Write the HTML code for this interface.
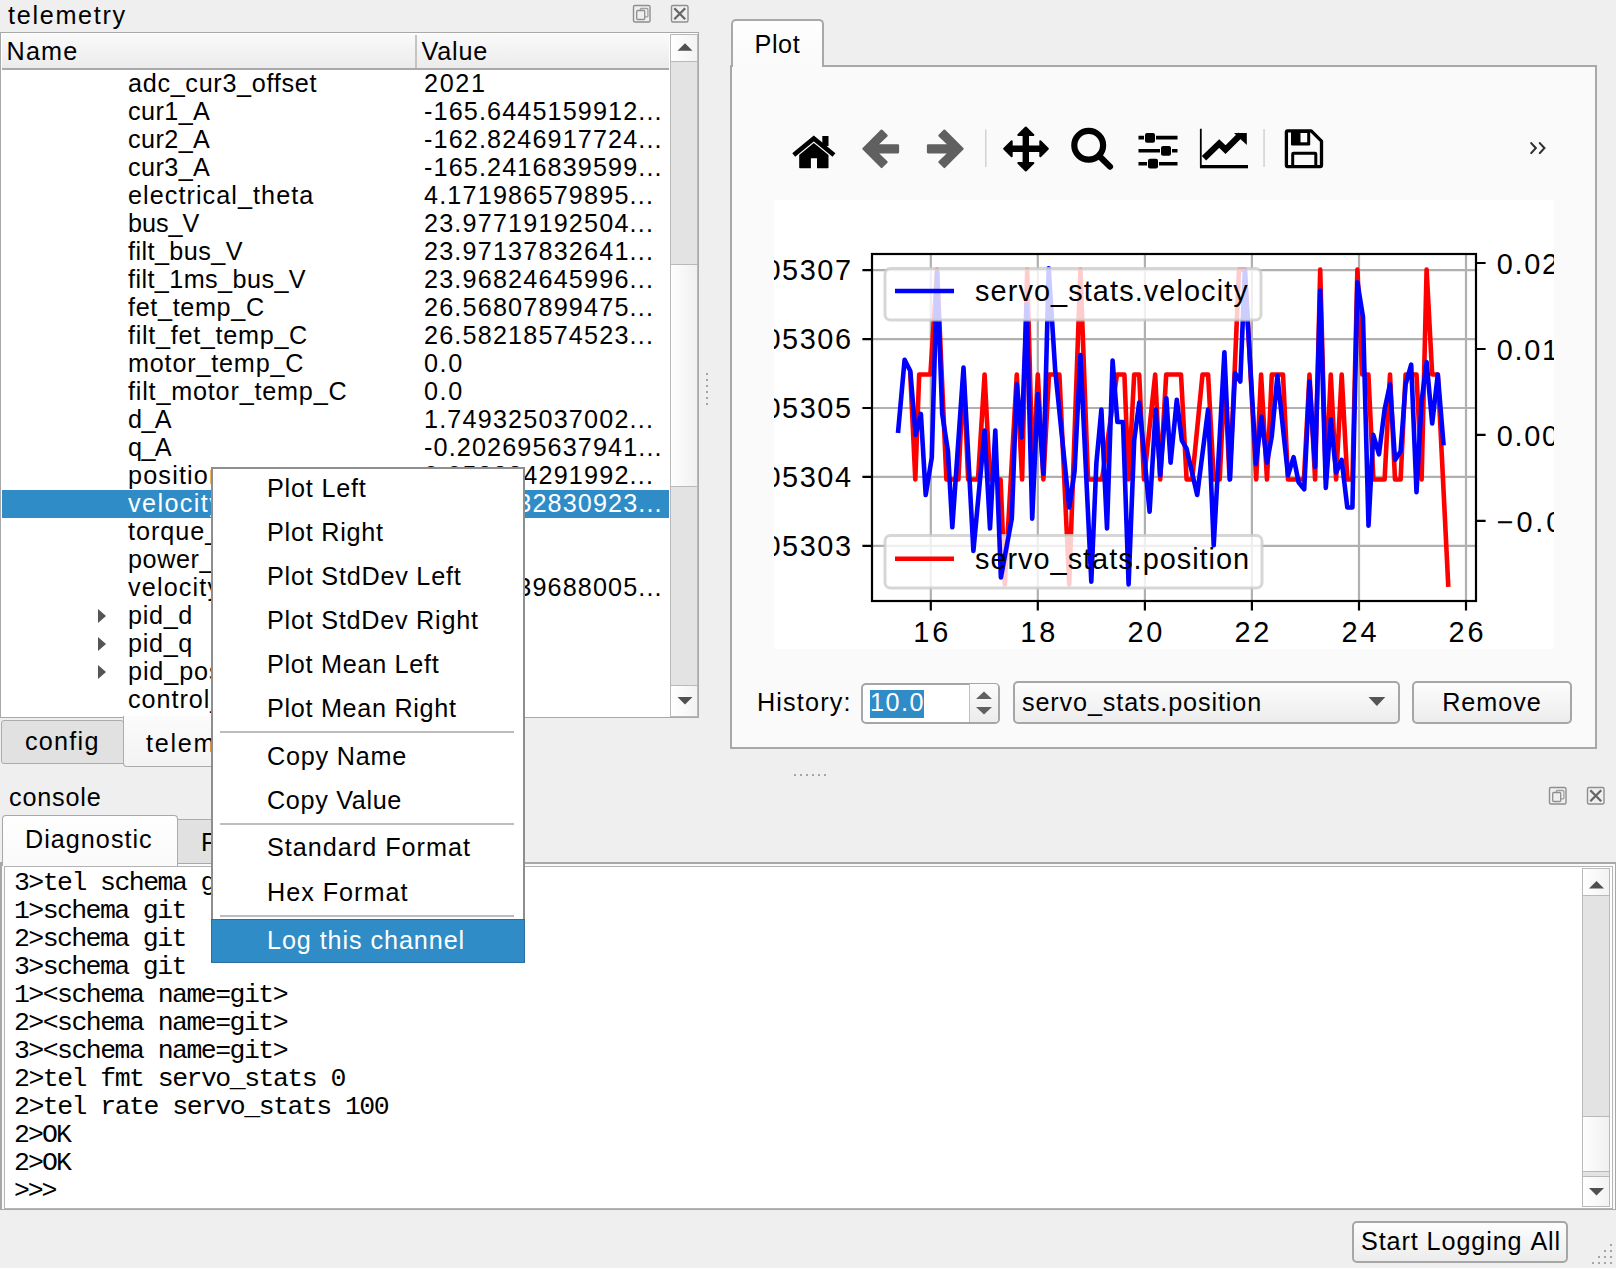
<!DOCTYPE html><html><head><meta charset="utf-8"><style>
html,body{margin:0;padding:0;width:1616px;height:1268px;overflow:hidden;background:#efefef;}
.t{position:absolute;white-space:pre;line-height:normal;}
.b{position:absolute;box-sizing:border-box;}
svg{position:absolute;overflow:visible;}
</style></head><body>
<div class="t" style="left:8.00px;top:0.89px;font-size:25.20px;letter-spacing:1.701px;color:#000;font-family:'Liberation Sans',sans-serif;">telemetry</div>
<svg style="left:0;top:0" width="1" height="1"><rect x="633.5" y="5.5" width="16.5" height="16.5" rx="1.5" fill="none" stroke="#8f8f8f" stroke-width="1.4"/><rect x="640.3" y="8.5" width="7.6" height="8.4" rx="1" fill="none" stroke="#a0a0a0" stroke-width="1.3"/><rect x="636.7" y="10.5" width="8" height="9" rx="1" fill="#efefef" stroke="#8f8f8f" stroke-width="1.3"/><rect x="671.5" y="5.5" width="16.5" height="16.5" rx="1.5" fill="none" stroke="#8f8f8f" stroke-width="1.4"/><path d="M674.3 8.3L685.2 19.2M685.2 8.3L674.3 19.2" stroke="#666" stroke-width="2.3"/></svg>
<div class="b" style="left:0px;top:32px;width:699px;height:686px;border:1.5px solid #a8a8a8;background:#fff;"></div>
<div class="b" style="left:1.5px;top:33.5px;width:667.5px;height:36.0px;background:linear-gradient(#fafafa,#ebebeb);border-bottom:2px solid #a9a9a9;"></div>
<div class="b" style="left:415px;top:35px;width:2px;height:33px;background:#c4c4c4;"></div>
<div class="t" style="left:6.50px;top:37.19px;font-size:25.20px;letter-spacing:1.195px;color:#000;font-family:'Liberation Sans',sans-serif;">Name</div>
<div class="t" style="left:421.50px;top:37.19px;font-size:25.20px;letter-spacing:0.829px;color:#000;font-family:'Liberation Sans',sans-serif;">Value</div>
<div class="t" style="left:128.00px;top:69.19px;font-size:25.20px;letter-spacing:0.688px;color:#000;font-family:'Liberation Sans',sans-serif;">adc_cur3_offset</div>
<div class="t" style="left:424.00px;top:69.19px;font-size:25.20px;letter-spacing:1.673px;color:#000;font-family:'Liberation Sans',sans-serif;">2021</div>
<div class="t" style="left:128.00px;top:97.19px;font-size:25.20px;letter-spacing:0.423px;color:#000;font-family:'Liberation Sans',sans-serif;">cur1_A</div>
<div class="t" style="left:424.00px;top:97.19px;font-size:25.20px;letter-spacing:1.123px;color:#000;font-family:'Liberation Sans',sans-serif;">-165.6445159912...</div>
<div class="t" style="left:128.00px;top:125.19px;font-size:25.20px;letter-spacing:0.423px;color:#000;font-family:'Liberation Sans',sans-serif;">cur2_A</div>
<div class="t" style="left:424.00px;top:125.19px;font-size:25.20px;letter-spacing:1.123px;color:#000;font-family:'Liberation Sans',sans-serif;">-162.8246917724...</div>
<div class="t" style="left:128.00px;top:153.19px;font-size:25.20px;letter-spacing:0.423px;color:#000;font-family:'Liberation Sans',sans-serif;">cur3_A</div>
<div class="t" style="left:424.00px;top:153.19px;font-size:25.20px;letter-spacing:1.123px;color:#000;font-family:'Liberation Sans',sans-serif;">-165.2416839599...</div>
<div class="t" style="left:128.00px;top:181.19px;font-size:25.20px;letter-spacing:1.061px;color:#000;font-family:'Liberation Sans',sans-serif;">electrical_theta</div>
<div class="t" style="left:424.00px;top:181.19px;font-size:25.20px;letter-spacing:1.176px;color:#000;font-family:'Liberation Sans',sans-serif;">4.171986579895...</div>
<div class="t" style="left:128.00px;top:209.19px;font-size:25.20px;letter-spacing:-0.022px;color:#000;font-family:'Liberation Sans',sans-serif;">bus_V</div>
<div class="t" style="left:424.00px;top:209.19px;font-size:25.20px;letter-spacing:1.176px;color:#000;font-family:'Liberation Sans',sans-serif;">23.97719192504...</div>
<div class="t" style="left:128.00px;top:237.19px;font-size:25.20px;letter-spacing:0.433px;color:#000;font-family:'Liberation Sans',sans-serif;">filt_bus_V</div>
<div class="t" style="left:424.00px;top:237.19px;font-size:25.20px;letter-spacing:1.176px;color:#000;font-family:'Liberation Sans',sans-serif;">23.97137832641...</div>
<div class="t" style="left:128.00px;top:265.19px;font-size:25.20px;letter-spacing:0.417px;color:#000;font-family:'Liberation Sans',sans-serif;">filt_1ms_bus_V</div>
<div class="t" style="left:424.00px;top:265.19px;font-size:25.20px;letter-spacing:1.176px;color:#000;font-family:'Liberation Sans',sans-serif;">23.96824645996...</div>
<div class="t" style="left:128.00px;top:293.19px;font-size:25.20px;letter-spacing:0.656px;color:#000;font-family:'Liberation Sans',sans-serif;">fet_temp_C</div>
<div class="t" style="left:424.00px;top:293.19px;font-size:25.20px;letter-spacing:1.176px;color:#000;font-family:'Liberation Sans',sans-serif;">26.56807899475...</div>
<div class="t" style="left:128.00px;top:321.19px;font-size:25.20px;letter-spacing:0.706px;color:#000;font-family:'Liberation Sans',sans-serif;">filt_fet_temp_C</div>
<div class="t" style="left:424.00px;top:321.19px;font-size:25.20px;letter-spacing:1.176px;color:#000;font-family:'Liberation Sans',sans-serif;">26.58218574523...</div>
<div class="t" style="left:128.00px;top:349.19px;font-size:25.20px;letter-spacing:0.809px;color:#000;font-family:'Liberation Sans',sans-serif;">motor_temp_C</div>
<div class="t" style="left:424.00px;top:349.19px;font-size:25.20px;letter-spacing:1.568px;color:#000;font-family:'Liberation Sans',sans-serif;">0.0</div>
<div class="t" style="left:128.00px;top:377.19px;font-size:25.20px;letter-spacing:0.805px;color:#000;font-family:'Liberation Sans',sans-serif;">filt_motor_temp_C</div>
<div class="t" style="left:424.00px;top:377.19px;font-size:25.20px;letter-spacing:1.568px;color:#000;font-family:'Liberation Sans',sans-serif;">0.0</div>
<div class="t" style="left:128.00px;top:405.19px;font-size:25.20px;letter-spacing:-0.593px;color:#000;font-family:'Liberation Sans',sans-serif;">d_A</div>
<div class="t" style="left:424.00px;top:405.19px;font-size:25.20px;letter-spacing:1.176px;color:#000;font-family:'Liberation Sans',sans-serif;">1.749325037002...</div>
<div class="t" style="left:128.00px;top:433.19px;font-size:25.20px;letter-spacing:-0.593px;color:#000;font-family:'Liberation Sans',sans-serif;">q_A</div>
<div class="t" style="left:424.00px;top:433.19px;font-size:25.20px;letter-spacing:1.123px;color:#000;font-family:'Liberation Sans',sans-serif;">-0.202695637941...</div>
<div class="t" style="left:128.00px;top:461.19px;font-size:25.20px;letter-spacing:1.172px;color:#000;font-family:'Liberation Sans',sans-serif;">position</div>
<div class="t" style="left:424.00px;top:461.19px;font-size:25.20px;letter-spacing:1.176px;color:#000;font-family:'Liberation Sans',sans-serif;">0.053284291992...</div>
<div class="b" style="left:1.5px;top:490px;width:667.5px;height:28px;background:#308cc6;"></div>
<div class="t" style="left:128.00px;top:489.19px;font-size:25.20px;letter-spacing:1.395px;color:#fff;font-family:'Liberation Sans',sans-serif;">velocity</div>
<div class="t" style="left:424.00px;top:489.19px;font-size:25.20px;letter-spacing:1.123px;color:#fff;font-family:'Liberation Sans',sans-serif;">-0.004232830923...</div>
<div class="t" style="left:128.00px;top:517.19px;font-size:25.20px;letter-spacing:0.981px;color:#000;font-family:'Liberation Sans',sans-serif;">torque_Nm</div>
<div class="t" style="left:128.00px;top:545.19px;font-size:25.20px;letter-spacing:0.579px;color:#000;font-family:'Liberation Sans',sans-serif;">power_W</div>
<div class="t" style="left:128.00px;top:573.19px;font-size:25.20px;letter-spacing:1.146px;color:#000;font-family:'Liberation Sans',sans-serif;">velocity_filt</div>
<div class="t" style="left:424.00px;top:573.19px;font-size:25.20px;letter-spacing:1.123px;color:#000;font-family:'Liberation Sans',sans-serif;">-0.003539688005...</div>
<div class="t" style="left:128.00px;top:601.19px;font-size:25.20px;letter-spacing:0.678px;color:#000;font-family:'Liberation Sans',sans-serif;">pid_d</div>
<svg style="left:0;top:0" width="1" height="1"><path d="M98 609.0L106 616.0L98 623.0Z" fill="#555"/></svg>
<div class="t" style="left:128.00px;top:629.19px;font-size:25.20px;letter-spacing:0.678px;color:#000;font-family:'Liberation Sans',sans-serif;">pid_q</div>
<svg style="left:0;top:0" width="1" height="1"><path d="M98 637.0L106 644.0L98 651.0Z" fill="#555"/></svg>
<div class="t" style="left:128.00px;top:657.19px;font-size:25.20px;letter-spacing:0.882px;color:#000;font-family:'Liberation Sans',sans-serif;">pid_position</div>
<svg style="left:0;top:0" width="1" height="1"><path d="M98 665.0L106 672.0L98 679.0Z" fill="#555"/></svg>
<div class="t" style="left:128.00px;top:685.19px;font-size:25.20px;letter-spacing:0.951px;color:#000;font-family:'Liberation Sans',sans-serif;">control_position</div>
<div class="b" style="left:670px;top:33.5px;width:27.5px;height:683.0px;background:#e3e3e3;border-left:1.5px solid #b9b9b9;border-right:1.5px solid #b9b9b9;"></div>
<div class="b" style="left:670px;top:33.5px;width:27.5px;height:28.5px;background:linear-gradient(90deg,#fff,#f3f3f3);border:1.5px solid #b9b9b9;"></div>
<div class="b" style="left:670px;top:264px;width:27.5px;height:223px;background:linear-gradient(90deg,#fefefe,#f0f0f0);border:1.5px solid #b9b9b9;"></div>
<div class="b" style="left:670px;top:685px;width:27.5px;height:31.5px;background:linear-gradient(90deg,#fff,#f3f3f3);border:1.5px solid #b9b9b9;"></div>
<svg style="left:0;top:0" width="1" height="1"><path d="M677.5 50.7L692.5 50.7L685 43.3Z" fill="#505050"/><path d="M677.5 697L692.5 697L685 704.5Z" fill="#505050"/></svg>
<div class="b" style="left:1px;top:720px;width:123px;height:44px;background:#e1e1e1;border:1.5px solid #acacac;border-top-left-radius:3px;border-top-right-radius:3px;border-bottom-left-radius:3px;"></div>
<div class="b" style="left:123px;top:716px;width:107px;height:51px;background:linear-gradient(#fbfbfb,#f3f3f3);border:1.5px solid #acacac;border-top:none;border-bottom-left-radius:4px;border-bottom-right-radius:4px;"></div>
<div class="t" style="left:25.00px;top:727.19px;font-size:25.20px;letter-spacing:1.239px;color:#000;font-family:'Liberation Sans',sans-serif;">config</div>
<div class="t" style="left:146.00px;top:729.19px;font-size:25.20px;letter-spacing:1.701px;color:#000;font-family:'Liberation Sans',sans-serif;">telemetry</div>
<div class="b" style="left:706px;top:373px;width:2px;height:2px;background:#a5a5a5;"></div>
<div class="b" style="left:706px;top:379px;width:2px;height:2px;background:#a5a5a5;"></div>
<div class="b" style="left:706px;top:385px;width:2px;height:2px;background:#a5a5a5;"></div>
<div class="b" style="left:706px;top:391px;width:2px;height:2px;background:#a5a5a5;"></div>
<div class="b" style="left:706px;top:397px;width:2px;height:2px;background:#a5a5a5;"></div>
<div class="b" style="left:706px;top:403px;width:2px;height:2px;background:#a5a5a5;"></div>
<div class="b" style="left:794px;top:774px;width:2px;height:2px;background:#a5a5a5;"></div>
<div class="b" style="left:800px;top:774px;width:2px;height:2px;background:#a5a5a5;"></div>
<div class="b" style="left:806px;top:774px;width:2px;height:2px;background:#a5a5a5;"></div>
<div class="b" style="left:812px;top:774px;width:2px;height:2px;background:#a5a5a5;"></div>
<div class="b" style="left:818px;top:774px;width:2px;height:2px;background:#a5a5a5;"></div>
<div class="b" style="left:824px;top:774px;width:2px;height:2px;background:#a5a5a5;"></div>
<div class="b" style="left:730px;top:65px;width:867px;height:684px;background:#fafafa;border:2px solid #a8a8a8;"></div>
<div class="b" style="left:730.5px;top:18.5px;width:93.0px;height:48.5px;background:linear-gradient(#fefefe,#fafafa);border:2px solid #a8a8a8;border-bottom:none;border-top-left-radius:5px;border-top-right-radius:5px;"></div>
<div class="t" style="left:754.50px;top:29.89px;font-size:25.20px;letter-spacing:0.604px;color:#000;font-family:'Liberation Sans',sans-serif;">Plot</div>
<svg style="left:0;top:0" width="1" height="1"><path d="M795.5 153.5L813.8 138.5L832.2 153.5" fill="none" stroke="#000" stroke-width="4.6" stroke-linecap="square"/><rect x="822.3" y="136" width="6.2" height="10" fill="#000"/><path d="M799.2 155L813.8 143L828.5 155L828.5 167.5Q828.5 168.3 827.7 168.3L817 168.3L817 158.2L810.9 158.2L810.9 168.3L800 168.3Q799.2 168.3 799.2 167.5Z" fill="#000"/><path d="M863.4 148.8L881.6 130.6L886.6 135.6L876.5 145.3L898 145.3L898 152.3L876.5 152.3L886.6 162L881.6 167Z" fill="#606060" stroke="#606060" stroke-width="2.2" stroke-linejoin="round"/><path d="M962.6 148.8L944.4 130.6L939.4 135.6L949.5 145.3L928 145.3L928 152.3L949.5 152.3L939.4 162L944.4 167Z" fill="#606060" stroke="#606060" stroke-width="2.2" stroke-linejoin="round"/><rect x="985" y="129.5" width="1.5" height="37.5" fill="#d2d2d2"/><path d="M1025.8 131L1025.8 167M1008 148.8L1044 148.8" stroke="#000" stroke-width="6.4"/><path d="M1025.8 127.5L1033.3 135L1018.3 135Z M1025.8 170.5L1033.3 163L1018.3 163Z M1004.2 148.8L1011.7 141.3L1011.7 156.3Z M1047.8 148.8L1040.3 141.3L1040.3 156.3Z" fill="#000" stroke="#000" stroke-width="2" stroke-linejoin="round"/><circle cx="1088.7" cy="145.3" r="14.4" fill="none" stroke="#000" stroke-width="6.2"/><path d="M1099.5 156.3L1110 166.6" stroke="#000" stroke-width="6.2" stroke-linecap="round"/><path d="M1138.5 137.6H1144M1156 137.6H1177.5M1138.5 150.8H1160M1172 150.8H1177.5M1138.5 163.7H1147M1159 163.7H1177.5" stroke="#000" stroke-width="3.6"/><rect x="1145" y="133" width="10" height="9.7" rx="2" fill="#000"/><rect x="1161" y="146" width="10" height="9.7" rx="2" fill="#000"/><rect x="1148" y="158.8" width="10" height="9.7" rx="2" fill="#000"/><path d="M1200.8 128.8V166.6H1248" fill="none" stroke="#000" stroke-width="1.8"/><rect x="1200" y="165" width="48" height="3.3" fill="#000"/><path d="M1204 158.3L1219.2 143.5L1225.5 149.6L1240.5 134.8" fill="none" stroke="#000" stroke-width="6.2"/><path d="M1234 133L1246.8 133L1246.8 145Z" fill="#000"/><rect x="1263.3" y="129" width="1.5" height="38" fill="#d2d2d2"/><path d="M1287.7 130.9H1311.2L1321.5 141.2V165.3Q1321.5 166.6 1320.2 166.6H1287.7Q1286.4 166.6 1286.4 165.3V132.2Q1286.4 130.9 1287.7 130.9Z" fill="none" stroke="#000" stroke-width="3.3" stroke-linejoin="round"/><path d="M1291 130.5H1310.2V144.2Q1310.2 145.5 1308.9 145.5H1292.3Q1291 145.5 1291 144.2Z" fill="#000"/><rect x="1300.5" y="133" width="6.7" height="9.3" fill="#fafafa"/><path d="M1292.7 167V154Q1292.7 153.2 1293.5 153.2H1315Q1315.8 153.2 1315.8 154V167" fill="none" stroke="#000" stroke-width="3"/></svg>
<svg style="left:0;top:0" width="1" height="1"><path d="M1531.2 143.1L1535.8 148.1L1531.2 153.1M1539.8 143.1L1544.4 148.1L1539.8 153.1" fill="none" stroke="#2e2e2e" stroke-width="2.1" stroke-linecap="round"/></svg>
<div class="b" style="left:774px;top:200px;width:780px;height:449px;background:#fff;"></div>
<div style="position:absolute;left:0;top:0;width:1616px;height:1268px;clip-path:inset(200px 62px 619px 774px);">
<svg style="left:0;top:0" width="1" height="1"><path d="M930.8 254V601M1037.8 254V601M1144.9 254V601M1251.9 254V601M1359.0 254V601M1466.0 254V601M872 270.2H1476M872 339.1H1476M872 408.0H1476M872 476.9H1476M872 545.8H1476" stroke="#b0b0b0" stroke-width="2.2"/><polyline points="910.3,374.5 915.3,479.5 919.2,374.5 930.4,374.5 937.1,269.6 946.4,479.5 958.4,479.5 963.5,374.5 968.2,479.5 978.0,479.5 984.6,374.5 990.0,479.5 1000.6,479.5 1004.8,584.5 1016.8,374.5 1022.1,479.5 1027.2,269.6 1032.8,479.5 1037.8,374.5 1043.4,479.5 1049.0,374.5 1059.4,374.5 1069.2,584.5 1080.4,269.6 1088.0,479.5 1102.0,479.5 1117.0,374.5 1124.4,374.5 1128.6,479.5 1134.2,374.5 1139.2,374.5 1144.0,479.5 1155.2,374.5 1160.2,479.5 1166.2,374.5 1181.0,374.5 1186.6,479.5 1192.2,479.5 1202.5,374.5 1208.1,374.5 1213.8,479.5 1219.7,479.5 1224.7,374.5 1229.6,479.5 1234.5,374.5 1239.0,269.6 1245.0,269.6 1256.2,479.5 1261.1,374.5 1267.0,479.5 1271.8,374.5 1283.0,374.5 1288.0,479.5 1303.9,479.5 1309.5,374.5 1315.1,479.5 1320.2,269.6 1325.8,479.5 1330.8,374.5 1336.1,479.5 1341.7,374.5 1347.3,479.5 1352.4,479.5 1357.4,269.6 1362.2,374.5 1368.4,374.5 1373.4,479.5 1384.6,479.5 1390.0,374.5 1395.0,479.5 1400.6,479.5 1405.6,374.5 1416.5,374.5 1421.6,479.5 1426.6,269.6 1432.2,374.5 1437.8,374.5 1448.2,584.5" fill="none" stroke="#ff0000" stroke-width="4.6" stroke-linejoin="round" stroke-linecap="square"/><rect x="885" y="535.5" width="377" height="52.5" rx="5.5" fill="#fff" fill-opacity="0.8" stroke="#cccccc" stroke-opacity="0.8" stroke-width="3"/><path d="M895 558.8H954" stroke="#ff0000" stroke-width="4.6"/><polyline points="898.2,430.7 904.6,359.8 910.3,371.0 915.6,434.9 920.9,413.9 925.7,495.0 931.8,457.3 937.1,272.4 942.2,413.9 948.0,451.7 952.3,527.3 963.5,367.6 973.4,550.9 984.6,430.5 990.0,528.5 995.3,430.5 1000.9,577.5 1011.8,518.7 1016.8,384.3 1021.6,437.5 1026.6,304.6 1032.2,518.7 1037.8,394.1 1043.4,473.9 1048.7,268.2 1055.2,370.3 1069.2,507.5 1074.6,471.1 1080.4,355.0 1091.3,581.6 1096.4,462.7 1101.4,409.5 1107.0,528.5 1112.6,360.6 1117.4,422.0 1123.0,422.0 1128.6,584.5 1134.2,440.3 1139.2,402.5 1149.6,511.7 1155.7,409.5 1160.2,475.3 1166.4,398.3 1170.6,462.7 1176.8,399.7 1181.8,440.3 1186.6,448.7 1197.2,494.9 1208.1,409.5 1213.7,545.3 1224.4,352.2 1230.0,479.5 1235.0,373.1 1240.3,381.5 1244.8,271.0 1256.0,464.1 1261.4,416.5 1267.0,462.7 1271.8,436.1 1277.4,375.9 1288.0,475.3 1293.6,457.1 1298.6,482.3 1304.2,489.3 1309.5,381.5 1315.1,466.9 1320.2,290.6 1325.8,487.9 1330.8,419.3 1336.1,472.5 1341.7,459.9 1347.3,507.5 1352.4,507.5 1357.4,282.2 1363.0,317.2 1368.5,525.7 1373.2,434.7 1379.0,454.3 1384.6,409.5 1390.0,384.3 1395.0,459.9 1400.6,451.5 1405.6,384.3 1411.2,364.7 1416.5,492.1 1421.6,401.1 1426.6,362.0 1432.2,423.5 1437.8,374.5 1443.4,443.1" fill="none" stroke="#0000ff" stroke-width="4.6" stroke-linejoin="round" stroke-linecap="square"/><rect x="885" y="268.5" width="376" height="51.5" rx="5.5" fill="#fff" fill-opacity="0.8" stroke="#cccccc" stroke-opacity="0.8" stroke-width="3"/><path d="M895 291H954" stroke="#0000ff" stroke-width="4.6"/><path d="M862.4 270.2H872M862.4 339.1H872M862.4 408.0H872M862.4 476.9H872M862.4 545.8H872M1476 263.0H1485.6M1476 349.0H1485.6M1476 434.9H1485.6M1476 520.9H1485.6M930.8 601V610.6M1037.8 601V610.6M1144.9 601V610.6M1251.9 601V610.6M1359.0 601V610.6M1466.0 601V610.6" stroke="#000" stroke-width="2.2"/><rect x="872" y="254" width="604" height="347" fill="none" stroke="#000" stroke-width="2.2"/></svg>
<div class="t" style="left:737.28px;top:254.47px;font-size:28.88px;letter-spacing:1.557px;color:#000;font-family:'Liberation Sans',sans-serif;">0.05307</div>
<div class="t" style="left:737.28px;top:323.37px;font-size:28.88px;letter-spacing:1.557px;color:#000;font-family:'Liberation Sans',sans-serif;">0.05306</div>
<div class="t" style="left:737.28px;top:392.27px;font-size:28.88px;letter-spacing:1.557px;color:#000;font-family:'Liberation Sans',sans-serif;">0.05305</div>
<div class="t" style="left:737.28px;top:461.17px;font-size:28.88px;letter-spacing:1.557px;color:#000;font-family:'Liberation Sans',sans-serif;">0.05304</div>
<div class="t" style="left:737.28px;top:530.07px;font-size:28.88px;letter-spacing:1.557px;color:#000;font-family:'Liberation Sans',sans-serif;">0.05303</div>
<div class="t" style="left:1496.80px;top:247.67px;font-size:28.88px;letter-spacing:1.677px;color:#000;font-family:'Liberation Sans',sans-serif;">0.02</div>
<div class="t" style="left:1496.80px;top:333.67px;font-size:28.88px;letter-spacing:1.677px;color:#000;font-family:'Liberation Sans',sans-serif;">0.01</div>
<div class="t" style="left:1496.80px;top:419.57px;font-size:28.88px;letter-spacing:1.677px;color:#000;font-family:'Liberation Sans',sans-serif;">0.00</div>
<div class="t" style="left:1496.80px;top:505.57px;font-size:28.88px;letter-spacing:2.803px;color:#000;font-family:'Liberation Sans',sans-serif;">−0.01</div>
<div class="t" style="left:913.30px;top:615.87px;font-size:28.88px;letter-spacing:2.875px;color:#000;font-family:'Liberation Sans',sans-serif;">16</div>
<div class="t" style="left:1020.34px;top:615.87px;font-size:28.88px;letter-spacing:2.875px;color:#000;font-family:'Liberation Sans',sans-serif;">18</div>
<div class="t" style="left:1127.38px;top:615.87px;font-size:28.88px;letter-spacing:2.875px;color:#000;font-family:'Liberation Sans',sans-serif;">20</div>
<div class="t" style="left:1234.42px;top:615.87px;font-size:28.88px;letter-spacing:2.875px;color:#000;font-family:'Liberation Sans',sans-serif;">22</div>
<div class="t" style="left:1341.46px;top:615.87px;font-size:28.88px;letter-spacing:2.875px;color:#000;font-family:'Liberation Sans',sans-serif;">24</div>
<div class="t" style="left:1448.50px;top:615.87px;font-size:28.88px;letter-spacing:2.875px;color:#000;font-family:'Liberation Sans',sans-serif;">26</div>
</div>
<div class="t" style="left:975.00px;top:275.17px;font-size:28.88px;letter-spacing:1.092px;color:#000;font-family:'Liberation Sans',sans-serif;">servo_stats.velocity</div>
<div class="t" style="left:975.00px;top:543.27px;font-size:28.88px;letter-spacing:0.997px;color:#000;font-family:'Liberation Sans',sans-serif;">servo_stats.position</div>
<div class="t" style="left:757.00px;top:687.69px;font-size:25.20px;letter-spacing:1.152px;color:#000;font-family:'Liberation Sans',sans-serif;">History:</div>
<div class="b" style="left:860.5px;top:682.5px;width:139.0px;height:41.0px;background:#fff;border:2px solid #a6a6a6;border-radius:5px;"></div>
<div class="b" style="left:969px;top:684px;width:29px;height:38px;background:linear-gradient(#fbfbfb,#ececec);border-left:1.5px solid #c0c0c0;border-top-right-radius:3px;border-bottom-right-radius:3px;"></div>
<svg style="left:0;top:0" width="1" height="1"><path d="M976 699L984 691.5L992 699Z M976 707L984 714.5L992 707Z" fill="#606060"/></svg>
<div class="b" style="left:870px;top:690px;width:54px;height:28px;background:#308cc6;"></div>
<div class="t" style="left:870.00px;top:688.19px;font-size:25.20px;letter-spacing:1.464px;color:#fff;font-family:'Liberation Sans',sans-serif;">10.0</div>
<div class="b" style="left:1013px;top:681px;width:386.5px;height:42.5px;background:linear-gradient(#fdfdfd,#ececec);border:2px solid #a6a6a6;border-radius:5px;"></div>
<div class="t" style="left:1022.00px;top:687.69px;font-size:25.20px;letter-spacing:0.870px;color:#000;font-family:'Liberation Sans',sans-serif;">servo_stats.position</div>
<svg style="left:0;top:0" width="1" height="1"><path d="M1368.5 697L1385.3 697L1376.9 706Z" fill="#555"/></svg>
<div class="b" style="left:1412px;top:681px;width:159.5px;height:42.5px;background:linear-gradient(#fdfdfd,#ececec);border:2px solid #a6a6a6;border-radius:5px;"></div>
<div class="t" style="left:1442.26px;top:687.69px;font-size:25.20px;letter-spacing:0.927px;color:#000;font-family:'Liberation Sans',sans-serif;">Remove</div>
<div class="t" style="left:9.00px;top:782.89px;font-size:25.20px;letter-spacing:0.809px;color:#000;font-family:'Liberation Sans',sans-serif;">console</div>
<svg style="left:0;top:0" width="1" height="1"><rect x="1549.5" y="787.5" width="16.5" height="16.5" rx="1.5" fill="none" stroke="#8f8f8f" stroke-width="1.4"/><rect x="1556.3" y="790.5" width="7.6" height="8.4" rx="1" fill="none" stroke="#a0a0a0" stroke-width="1.3"/><rect x="1552.7" y="792.5" width="8" height="9" rx="1" fill="#efefef" stroke="#8f8f8f" stroke-width="1.3"/><rect x="1587.5" y="787.5" width="16.5" height="16.5" rx="1.5" fill="none" stroke="#8f8f8f" stroke-width="1.4"/><path d="M1590.3 790.3L1601.2 801.2M1601.2 790.3L1590.3 801.2" stroke="#666" stroke-width="2.3"/></svg>
<div class="b" style="left:0px;top:861.5px;width:1616px;height:348.5px;background:#fafafa;border-top:2px solid #a8a8a8;border-bottom:1.5px solid #a8a8a8;"></div>
<div class="b" style="left:1.5px;top:815px;width:176.5px;height:51px;background:linear-gradient(#fefefe,#fafafa);border:1.5px solid #a8a8a8;border-bottom:none;border-top-left-radius:4px;border-top-right-radius:4px;"></div>
<div class="b" style="left:177px;top:818.5px;width:63px;height:44.0px;background:#e1e1e1;border:1.5px solid #acacac;border-bottom:none;border-top-right-radius:3px;"></div>
<div class="t" style="left:25.00px;top:825.19px;font-size:25.20px;letter-spacing:1.012px;color:#000;font-family:'Liberation Sans',sans-serif;">Diagnostic</div>
<div class="t" style="left:201.00px;top:828.19px;font-size:25.20px;letter-spacing:0.604px;color:#000;font-family:'Liberation Sans',sans-serif;">Plot</div>
<div class="b" style="left:0px;top:862px;width:1.5px;height:348px;background:#a8a8a8;"></div>
<div class="b" style="left:1614.5px;top:862px;width:1.5px;height:348px;background:#a8a8a8;"></div>
<div class="b" style="left:4px;top:865.5px;width:1609px;height:343.0px;background:#fff;border:1.5px solid #b4b4b4;"></div>
<div class="t" style="left:14.00px;top:868.13px;font-size:26.50px;letter-spacing:-1.550px;color:#000;font-family:'Liberation Mono',monospace;">3&gt;tel&#160;schema&#160;git</div>
<div class="t" style="left:14.00px;top:896.13px;font-size:26.50px;letter-spacing:-1.585px;color:#000;font-family:'Liberation Mono',monospace;">1&gt;schema&#160;git</div>
<div class="t" style="left:14.00px;top:924.13px;font-size:26.50px;letter-spacing:-1.585px;color:#000;font-family:'Liberation Mono',monospace;">2&gt;schema&#160;git</div>
<div class="t" style="left:14.00px;top:952.13px;font-size:26.50px;letter-spacing:-1.585px;color:#000;font-family:'Liberation Mono',monospace;">3&gt;schema&#160;git</div>
<div class="t" style="left:14.00px;top:980.13px;font-size:26.50px;letter-spacing:-1.534px;color:#000;font-family:'Liberation Mono',monospace;">1&gt;&lt;schema&#160;name=git&gt;</div>
<div class="t" style="left:14.00px;top:1008.13px;font-size:26.50px;letter-spacing:-1.534px;color:#000;font-family:'Liberation Mono',monospace;">2&gt;&lt;schema&#160;name=git&gt;</div>
<div class="t" style="left:14.00px;top:1036.13px;font-size:26.50px;letter-spacing:-1.534px;color:#000;font-family:'Liberation Mono',monospace;">3&gt;&lt;schema&#160;name=git&gt;</div>
<div class="t" style="left:14.00px;top:1064.13px;font-size:26.50px;letter-spacing:-1.519px;color:#000;font-family:'Liberation Mono',monospace;">2&gt;tel&#160;fmt&#160;servo_stats&#160;0</div>
<div class="t" style="left:14.00px;top:1092.13px;font-size:26.50px;letter-spacing:-1.512px;color:#000;font-family:'Liberation Mono',monospace;">2&gt;tel&#160;rate&#160;servo_stats&#160;100</div>
<div class="t" style="left:14.00px;top:1120.13px;font-size:26.50px;letter-spacing:-1.938px;color:#000;font-family:'Liberation Mono',monospace;">2&gt;OK</div>
<div class="t" style="left:14.00px;top:1148.13px;font-size:26.50px;letter-spacing:-1.938px;color:#000;font-family:'Liberation Mono',monospace;">2&gt;OK</div>
<div class="t" style="left:14.00px;top:1176.13px;font-size:26.50px;letter-spacing:-2.180px;color:#000;font-family:'Liberation Mono',monospace;">&gt;&gt;&gt;</div>
<div class="b" style="left:1582px;top:868px;width:27.5px;height:339px;background:#e3e3e3;border-left:1.5px solid #b9b9b9;border-right:1.5px solid #b9b9b9;"></div>
<div class="b" style="left:1582px;top:868px;width:27.5px;height:28px;background:linear-gradient(90deg,#fff,#f3f3f3);border:1.5px solid #b9b9b9;"></div>
<div class="b" style="left:1582px;top:1116px;width:27.5px;height:56px;background:linear-gradient(90deg,#fefefe,#f0f0f0);border:1.5px solid #b9b9b9;"></div>
<div class="b" style="left:1582px;top:1176px;width:27.5px;height:31px;background:linear-gradient(90deg,#fff,#f3f3f3);border:1.5px solid #b9b9b9;"></div>
<svg style="left:0;top:0" width="1" height="1"><path d="M1589 888.5L1604 888.5L1596.5 881Z" fill="#505050"/><path d="M1589 1188L1604 1188L1596.5 1195.5Z" fill="#505050"/></svg>
<div class="b" style="left:1352px;top:1220.5px;width:216px;height:42.5px;background:linear-gradient(#fdfdfd,#ececec);border:2px solid #a6a6a6;border-radius:5px;"></div>
<div class="t" style="left:1361.00px;top:1227.19px;font-size:25.20px;letter-spacing:0.898px;color:#000;font-family:'Liberation Sans',sans-serif;">Start&#160;Logging&#160;All</div>
<div class="b" style="left:1610px;top:1244px;width:2px;height:2px;background:#a5a5a5;"></div>
<div class="b" style="left:1610px;top:1250px;width:2px;height:2px;background:#a5a5a5;"></div>
<div class="b" style="left:1604px;top:1250px;width:2px;height:2px;background:#a5a5a5;"></div>
<div class="b" style="left:1610px;top:1256px;width:2px;height:2px;background:#a5a5a5;"></div>
<div class="b" style="left:1604px;top:1256px;width:2px;height:2px;background:#a5a5a5;"></div>
<div class="b" style="left:1598px;top:1256px;width:2px;height:2px;background:#a5a5a5;"></div>
<div class="b" style="left:1610px;top:1262px;width:2px;height:2px;background:#a5a5a5;"></div>
<div class="b" style="left:1604px;top:1262px;width:2px;height:2px;background:#a5a5a5;"></div>
<div class="b" style="left:1598px;top:1262px;width:2px;height:2px;background:#a5a5a5;"></div>
<div class="b" style="left:1592px;top:1262px;width:2px;height:2px;background:#a5a5a5;"></div>
<div class="b" style="left:211px;top:467px;width:314px;height:496px;background:#fff;border:2px solid #8e8e8e;"></div>
<div class="t" style="left:267.00px;top:473.89px;font-size:25.20px;letter-spacing:0.800px;color:#000;font-family:'Liberation Sans',sans-serif;">Plot&#160;Left</div>
<div class="t" style="left:267.00px;top:517.89px;font-size:25.20px;letter-spacing:0.757px;color:#000;font-family:'Liberation Sans',sans-serif;">Plot&#160;Right</div>
<div class="t" style="left:267.00px;top:561.89px;font-size:25.20px;letter-spacing:0.781px;color:#000;font-family:'Liberation Sans',sans-serif;">Plot&#160;StdDev&#160;Left</div>
<div class="t" style="left:267.00px;top:605.89px;font-size:25.20px;letter-spacing:0.758px;color:#000;font-family:'Liberation Sans',sans-serif;">Plot&#160;StdDev&#160;Right</div>
<div class="t" style="left:267.00px;top:649.89px;font-size:25.20px;letter-spacing:0.722px;color:#000;font-family:'Liberation Sans',sans-serif;">Plot&#160;Mean&#160;Left</div>
<div class="t" style="left:267.00px;top:693.89px;font-size:25.20px;letter-spacing:0.699px;color:#000;font-family:'Liberation Sans',sans-serif;">Plot&#160;Mean&#160;Right</div>
<div class="t" style="left:267.00px;top:741.99px;font-size:25.20px;letter-spacing:0.783px;color:#000;font-family:'Liberation Sans',sans-serif;">Copy&#160;Name</div>
<div class="t" style="left:267.00px;top:785.69px;font-size:25.20px;letter-spacing:0.666px;color:#000;font-family:'Liberation Sans',sans-serif;">Copy&#160;Value</div>
<div class="t" style="left:267.00px;top:833.19px;font-size:25.20px;letter-spacing:1.000px;color:#000;font-family:'Liberation Sans',sans-serif;">Standard&#160;Format</div>
<div class="t" style="left:267.00px;top:877.69px;font-size:25.20px;letter-spacing:0.986px;color:#000;font-family:'Liberation Sans',sans-serif;">Hex&#160;Format</div>
<div class="b" style="left:220px;top:730.5px;width:294px;height:2.0px;background:#bdbdbd;"></div>
<div class="b" style="left:220px;top:823px;width:294px;height:2px;background:#bdbdbd;"></div>
<div class="b" style="left:220px;top:914.5px;width:294px;height:2.0px;background:#bdbdbd;"></div>
<div class="b" style="left:211px;top:919px;width:314px;height:44px;background:#308cc6;border:1.5px solid #2a6f9f;"></div>
<div class="t" style="left:267.00px;top:925.89px;font-size:25.20px;letter-spacing:0.918px;color:#fff;font-family:'Liberation Sans',sans-serif;">Log&#160;this&#160;channel</div>
</body></html>
